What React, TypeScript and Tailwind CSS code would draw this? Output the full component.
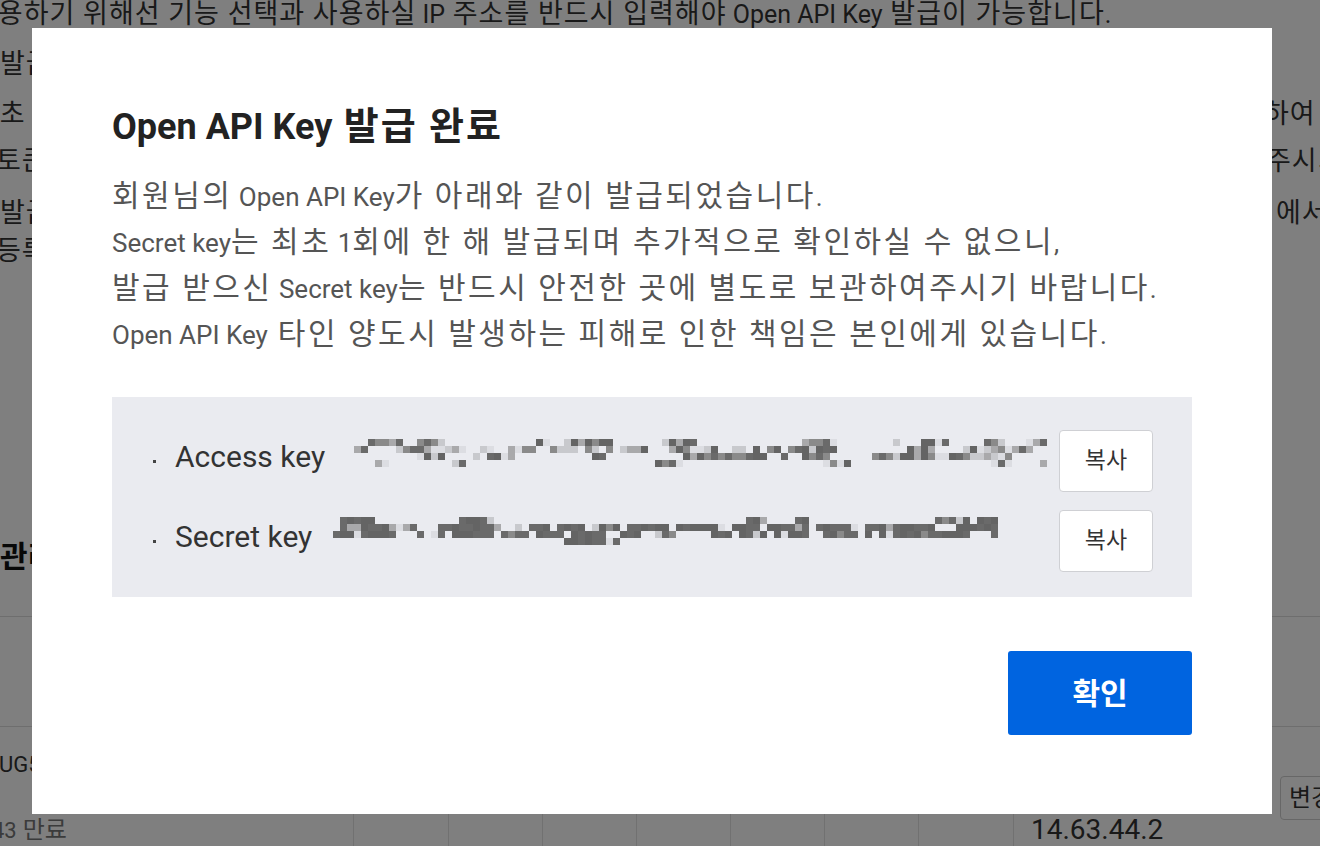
import { useMemo } from 'react';

// pseudo random so the blurred keys look the same on every render
function makeRng(seed: number) {
  let s = seed;
  return () => {
    s = (s * 1103515245 + 12345) & 0x7fffffff;
    return s / 0x7fffffff;
  };
}

const SHADES = ['#646464', '#6a6a6a', '#8a8a8a', '#a9a9ab', '#c8c9cd', '#dcdde2'];

type Cell = { x: number; y: number; c: string };

function makeCells(seed: number, cols: number, density: number[], dark: number) {
  const rand = makeRng(seed);
  const cells: Cell[] = [];
  density.forEach((d, row) => {
    let run = 0;
    for (let col = 0; col < cols; col++) {
      const on = run > 0 || rand() < d;
      if (on) {
        run = run > 0 ? run - 1 : Math.floor(rand() * 5);
        const shade = rand() < dark ? SHADES[Math.floor(rand() * 2)] : SHADES[2 + Math.floor(rand() * 4)];
        cells.push({ x: col, y: row, c: shade });
      }
    }
  });
  return cells;
}

function Redacted({ seed, cols, density, dark, className }: { seed: number; cols: number; density: number[]; dark: number; className?: string }) {
  const cells = useMemo(() => makeCells(seed, cols, density, dark), [seed, cols, density, dark]);
  const size = 7;
  return (
    <svg width={cols * size} height={density.length * size} className={className}>
      {cells.map((cell, i) => (
        <rect key={i} x={cell.x * size} y={cell.y * size} width={size} height={size} fill={cell.c} />
      ))}
    </svg>
  );
}

// hangul in the screenshot is set wider than the latin text, so hangul runs get their own size/tracking
function Ko({ children, k }: { children: string; k: string }) {
  const parts = children.split(/(\s*[가-힣]+(?:\s+[가-힣]+)*)/);
  return (
    <>
      {parts.map((p, i) =>
        i % 2 === 1 ? (
          <span key={i} className={k}>
            {p}
          </span>
        ) : (
          p
        )
      )}
    </>
  );
}

const accessDensity = [0.18, 0.36, 0.26, 0.08];
const secretDensity = [0.03, 0.55, 0.6, 0.04];

function KeyRow({ label, children }: { label: string; children: React.ReactNode }) {
  return (
    <div className="flex h-[62px] items-center">
      <span className="ml-[1px] h-[3px] w-[3px] bg-[#444]" />
      <span className="mb-[8px] ml-[19px] text-[30px] leading-[40px] text-[#333]">{label}</span>
      {children}
      <button className="ml-auto h-[62px] w-[94px] rounded-[4px] border border-[#cfd0d4] bg-white text-[23px] text-[#333]">
        복사
      </button>
    </div>
  );
}

function BackgroundPage() {
  const k = 'text-[27px] tracking-[1px]';
  return (
    <div className="h-[846px] w-[1320px] overflow-hidden bg-white text-[25px] text-[#333]">
      <p className="-ml-[28px] whitespace-nowrap leading-[28px]">
        <Ko k={k}>이용하기 위해선 기능 선택과 사용하실 IP 주소를 반드시 입력해야 Open API Key 발급이 가능합니다.</Ko>
      </p>

      <div className="mt-[16px] flex h-[38px] items-center whitespace-nowrap">
        <span className={k}>발급 신청 후 이용 가능합니다.</span>
      </div>
      <div className="mt-[12px] flex h-[38px] items-center whitespace-nowrap">
        <span className={`-ml-[26px] w-[1290px] shrink-0 ${k}`}>최초 발급 시 Secret key를 확인</span>
        <span className={k}>하여 추가</span>
      </div>
      <div className="mt-[9px] flex h-[38px] items-center whitespace-nowrap">
        <span className={`-ml-[4px] w-[1270px] shrink-0 ${k}`}>토큰 발급 후 사용해</span>
        <span className={k}>주시기 바랍니다</span>
      </div>
      <div className="mt-[14px] flex h-[38px] items-center whitespace-nowrap">
        <span className={`w-[1276px] shrink-0 ${k}`}>발급 내역은 마이페이지</span>
        <span className={k}>에서 확인</span>
      </div>
      <div className="flex h-[38px] items-center whitespace-nowrap">
        <span className={`-ml-[4px] ${k}`}>등록된 IP 주소</span>
      </div>

      <h2 className="mt-[269px] text-[30px] font-bold leading-[36px] text-[#111]">관리</h2>

      <div className="mt-[41px] border-t border-[#dcdcdc]">
        <div className="h-[110px] border-b border-[#dcdcdc]" />
        <div className="grid grid-cols-[353px_95px_94px_94px_94px_94px_94px_95px_260px_1fr] text-[22px]">
          <div className="flex flex-col pt-[24px]">
            <span className="-ml-[1px] whitespace-nowrap leading-[28px] text-[#333]">UG5KQ2M8</span>
            <span className="-ml-[8px] mt-[37px] whitespace-nowrap leading-[28px] text-[#777]">
              <Ko k="text-[24px]">43 만료</Ko>
            </span>
          </div>
          <div className="h-[130px] border-l border-[#e2e2e2]" />
          <div className="border-l border-[#e2e2e2]" />
          <div className="border-l border-[#e2e2e2]" />
          <div className="border-l border-[#e2e2e2]" />
          <div className="border-l border-[#e2e2e2]" />
          <div className="border-l border-[#e2e2e2]" />
          <div className="border-l border-[#e2e2e2]" />
          <div className="border-l border-[#e2e2e2] pl-[17px] pt-[86px] text-[28px] leading-[34px] text-[#333]">
            14.63.44.2
          </div>
          <div className="pl-[7px] pt-[49px]">
            <button className="h-[44px] w-[80px] rounded-[4px] border border-[#cfcfcf] bg-white pl-[8px] text-left text-[24px] text-[#333]">
              변경
            </button>
          </div>
        </div>
      </div>
    </div>
  );
}

export default function App() {
  const body = 'text-[30px] tracking-[2.5px]';
  return (
    <div className="relative h-[846px] w-[1320px] overflow-hidden font-[Roboto,'Noto_Sans_CJK_KR',sans-serif]">
      <BackgroundPage />

      {/* Dimmed overlay + dialog */}
      <div className="absolute inset-0 bg-black/50">
        <div
          role="dialog"
          className="absolute left-[32px] top-[28px] flex h-[786px] w-[1240px] flex-col bg-white px-[80px] pb-[79px] pt-[76px]"
        >
          <h1 className="text-[36px] font-bold leading-[44px] text-[#222]">
            <Ko k="text-[38px] tracking-[2px]">Open API Key 발급 완료</Ko>
          </h1>

          <div className="mt-[24px] text-[26px] leading-[46px] text-[#555]">
            <p className="h-[46px]">
              <Ko k={body}>회원님의 Open API Key가 아래와 같이 발급되었습니다.</Ko>
            </p>
            <p className="h-[46px]">
              <Ko k={body}>Secret key는 최초 1회에 한 해 발급되며 추가적으로 확인하실 수 없으니,</Ko>
            </p>
            <p className="h-[46px]">
              <Ko k={body}>발급 받으신 Secret key는 반드시 안전한 곳에 별도로 보관하여주시기 바랍니다.</Ko>
            </p>
            <p className="h-[46px]">
              <Ko k={body}>Open API Key 타인 양도시 발생하는 피해로 인한 책임은 본인에게 있습니다.</Ko>
            </p>
          </div>

          <div className="mt-[40px] flex flex-col gap-[18px] bg-[#eaebf0] pb-[25px] pl-[40px] pr-[39px] pt-[33px]">
            <KeyRow label="Access key">
              <Redacted seed={17} cols={100} density={accessDensity} dark={0.4} className="mb-[16px] ml-[22px]" />
            </KeyRow>
            <KeyRow label="Secret key">
              <Redacted seed={91} cols={95} density={secretDensity} dark={0.85} className="mb-[20px] ml-[21px]" />
            </KeyRow>
          </div>

          <div className="mt-[54px] flex justify-end">
            <button className="h-[84px] w-[184px] rounded-[3px] bg-[#0064e0] text-[30px] font-bold text-white">
              확인
            </button>
          </div>
        </div>
      </div>
    </div>
  );
}
